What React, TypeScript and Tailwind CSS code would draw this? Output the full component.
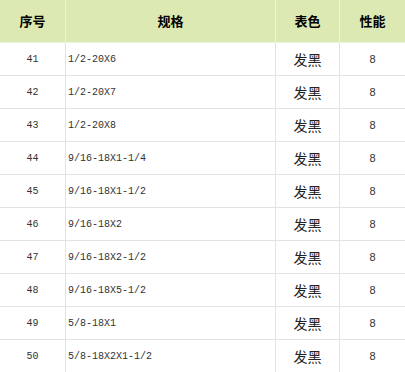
import React from "react";

const rows: [string, string][] = [
  ["41", "1/2-20X6"],
  ["42", "1/2-20X7"],
  ["43", "1/2-20X8"],
  ["44", "9/16-18X1-1/4"],
  ["45", "9/16-18X1-1/2"],
  ["46", "9/16-18X2"],
  ["47", "9/16-18X2-1/2"],
  ["48", "9/16-18X5-1/2"],
  ["49", "5/8-18X1"],
  ["50", "5/8-18X2X1-1/2"],
];

const cols = "grid grid-cols-[66px_210px_64px_65px]";
const mono = { fontFamily: '"Liberation Mono", "Noto Sans CJK SC", monospace' };
const cjk = { fontFamily: '"Noto Sans CJK SC", sans-serif' };

export default function App() {
  return (
    <div className="w-[405px] h-[372px] overflow-hidden bg-white">
      <div className={`${cols} h-[43px] bg-[#dce9b2] border-b border-[#eef3dc] text-[13px] font-bold text-black`} style={cjk}>
        <div className="flex items-center justify-center border-r border-[#eef3dc]">序号</div>
        <div className="flex items-center justify-center border-r border-[#eef3dc]">规格</div>
        <div className="flex items-center justify-center border-r border-[#eef3dc]">表色</div>
        <div className="flex items-center justify-center">性能</div>
      </div>
      {rows.map(([n, s]) => (
        <div key={n} className={`${cols} h-[33px] border-b border-[#e3e3e3] text-[#333]`}>
          <div className="flex items-center justify-center border-r border-[#e3e3e3] text-[10px]" style={mono}>{n}</div>
          <div className="flex items-center pl-[2px] border-r border-[#e3e3e3] text-[10px]" style={mono}>{s}</div>
          <div className="flex items-center justify-center border-r border-[#e3e3e3] text-[14px] text-[#222]" style={cjk}>发黑</div>
          <div className="flex items-center justify-center text-[11px]" style={{ fontFamily: '"Liberation Sans", sans-serif' }}>8</div>
        </div>
      ))}
    </div>
  );
}
